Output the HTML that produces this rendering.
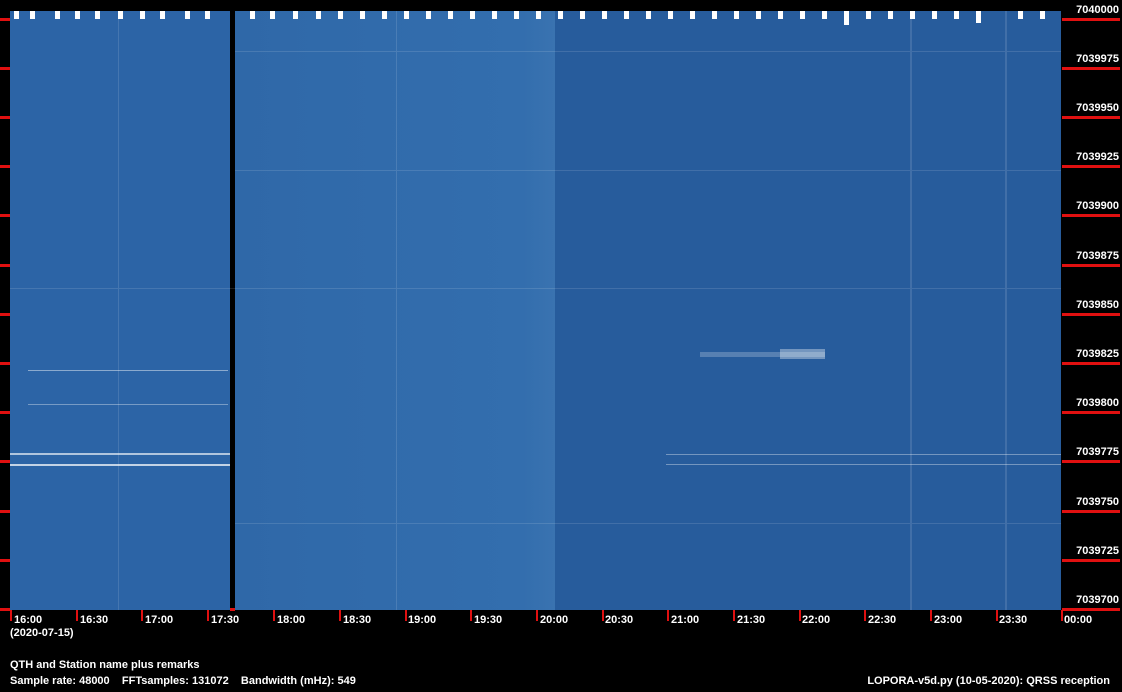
<!DOCTYPE html>
<html><head><style>
*{margin:0;padding:0}
body{width:1122px;height:692px;background:#000;position:relative;overflow:hidden;font-family:"Liberation Sans",sans-serif;font-weight:bold;font-size:11px;color:#fff}
.a{position:absolute}
.lab{position:absolute;right:3px;width:60px;text-align:right;font-size:11px}
.tl{position:absolute;top:614px;font-size:11px}
.tk{position:absolute;top:610px;width:2px;height:11px;background:#e01010}
</style></head><body>
<svg class="a" style="left:0;top:0" width="1122" height="692">
<defs>
<linearGradient id="g1" x1="0" x2="1"><stop offset="0" stop-color="#2f68a8"/><stop offset="0.9" stop-color="#336eae"/><stop offset="1" stop-color="#3a73b0"/></linearGradient>
</defs>
<rect x="10" y="11" width="220" height="599" fill="#2c64a6"/>
<rect x="235" y="11" width="320" height="599" fill="url(#g1)"/>
<rect x="555" y="11" width="506" height="599" fill="#275c9c"/>
<rect x="230" y="11" width="5" height="599" fill="#000"/>
<g fill="#fff" opacity="0.9">
<rect x="10" y="453" width="220" height="2" opacity="0.7"/>
<rect x="10" y="464" width="220" height="2" opacity="0.8"/>
<rect x="28" y="370" width="200" height="1" opacity="0.5"/>
<rect x="28" y="404" width="200" height="1" opacity="0.4"/>
<rect x="666" y="454" width="395" height="1" opacity="0.4"/>
<rect x="666" y="464" width="395" height="1" opacity="0.4"/>
<rect x="700" y="352" width="125" height="5" opacity="0.25"/>
<rect x="780" y="349" width="45" height="10" opacity="0.4"/>
</g>
<g fill="#fff" opacity="0.12">
<rect x="235" y="51" width="826" height="1"/><rect x="235" y="170" width="826" height="1"/>
<rect x="10" y="288" width="1051" height="1"/><rect x="235" y="523" width="826" height="1"/>
<rect x="118" y="11" width="1" height="599"/><rect x="396" y="11" width="1" height="599"/>
<rect x="910" y="11" width="2" height="599"/><rect x="1005" y="11" width="2" height="599"/>
</g>
<g fill="#fff">
<rect x="14" y="11" width="5" height="8"/><rect x="30" y="11" width="5" height="8"/><rect x="55" y="11" width="5" height="8"/><rect x="75" y="11" width="5" height="8"/><rect x="95" y="11" width="5" height="8"/><rect x="118" y="11" width="5" height="8"/><rect x="140" y="11" width="5" height="8"/><rect x="160" y="11" width="5" height="8"/><rect x="185" y="11" width="5" height="8"/><rect x="205" y="11" width="5" height="8"/>
<rect x="250" y="11" width="5" height="8"/><rect x="270" y="11" width="5" height="8"/><rect x="293" y="11" width="5" height="8"/><rect x="316" y="11" width="5" height="8"/><rect x="338" y="11" width="5" height="8"/><rect x="360" y="11" width="5" height="8"/><rect x="382" y="11" width="5" height="8"/><rect x="404" y="11" width="5" height="8"/><rect x="426" y="11" width="5" height="8"/><rect x="448" y="11" width="5" height="8"/><rect x="470" y="11" width="5" height="8"/><rect x="492" y="11" width="5" height="8"/><rect x="514" y="11" width="5" height="8"/><rect x="536" y="11" width="5" height="8"/><rect x="558" y="11" width="5" height="8"/><rect x="580" y="11" width="5" height="8"/><rect x="602" y="11" width="5" height="8"/><rect x="624" y="11" width="5" height="8"/><rect x="646" y="11" width="5" height="8"/><rect x="668" y="11" width="5" height="8"/><rect x="690" y="11" width="5" height="8"/><rect x="712" y="11" width="5" height="8"/><rect x="734" y="11" width="5" height="8"/><rect x="756" y="11" width="5" height="8"/><rect x="778" y="11" width="5" height="8"/><rect x="800" y="11" width="5" height="8"/><rect x="822" y="11" width="5" height="8"/><rect x="844" y="11" width="5" height="14"/><rect x="866" y="11" width="5" height="8"/><rect x="888" y="11" width="5" height="8"/><rect x="910" y="11" width="5" height="8"/><rect x="932" y="11" width="5" height="8"/><rect x="954" y="11" width="5" height="8"/><rect x="976" y="11" width="5" height="12"/><rect x="1018" y="11" width="5" height="8"/><rect x="1040" y="11" width="5" height="8"/>
</g>
<g fill="#e01010">
<rect x="0" y="18" width="10" height="3"/><rect x="1062" y="18" width="58" height="3"/>
<rect x="0" y="67" width="10" height="3"/><rect x="1062" y="67" width="58" height="3"/>
<rect x="0" y="116" width="10" height="3"/><rect x="1062" y="116" width="58" height="3"/>
<rect x="0" y="165" width="10" height="3"/><rect x="1062" y="165" width="58" height="3"/>
<rect x="0" y="214" width="10" height="3"/><rect x="1062" y="214" width="58" height="3"/>
<rect x="0" y="264" width="10" height="3"/><rect x="1062" y="264" width="58" height="3"/>
<rect x="0" y="313" width="10" height="3"/><rect x="1062" y="313" width="58" height="3"/>
<rect x="0" y="362" width="10" height="3"/><rect x="1062" y="362" width="58" height="3"/>
<rect x="0" y="411" width="10" height="3"/><rect x="1062" y="411" width="58" height="3"/>
<rect x="0" y="460" width="10" height="3"/><rect x="1062" y="460" width="58" height="3"/>
<rect x="0" y="510" width="10" height="3"/><rect x="1062" y="510" width="58" height="3"/>
<rect x="0" y="559" width="10" height="3"/><rect x="1062" y="559" width="58" height="3"/>
<rect x="0" y="608" width="10" height="3"/><rect x="1062" y="608" width="58" height="3"/>
<rect x="230" y="608" width="5" height="3"/>
</g>
</svg>
<div class="lab" style="top:4px">7040000</div>
<div class="lab" style="top:53px">7039975</div>
<div class="lab" style="top:102px">7039950</div>
<div class="lab" style="top:151px">7039925</div>
<div class="lab" style="top:200px">7039900</div>
<div class="lab" style="top:250px">7039875</div>
<div class="lab" style="top:299px">7039850</div>
<div class="lab" style="top:348px">7039825</div>
<div class="lab" style="top:397px">7039800</div>
<div class="lab" style="top:446px">7039775</div>
<div class="lab" style="top:496px">7039750</div>
<div class="lab" style="top:545px">7039725</div>
<div class="lab" style="top:594px">7039700</div>

<div class="tk" style="left:10px"></div><div class="tl" style="left:14px">16:00</div>
<div class="tk" style="left:76px"></div><div class="tl" style="left:80px">16:30</div>
<div class="tk" style="left:141px"></div><div class="tl" style="left:145px">17:00</div>
<div class="tk" style="left:207px"></div><div class="tl" style="left:211px">17:30</div>
<div class="tk" style="left:273px"></div><div class="tl" style="left:277px">18:00</div>
<div class="tk" style="left:339px"></div><div class="tl" style="left:343px">18:30</div>
<div class="tk" style="left:405px"></div><div class="tl" style="left:408px">19:00</div>
<div class="tk" style="left:470px"></div><div class="tl" style="left:474px">19:30</div>
<div class="tk" style="left:536px"></div><div class="tl" style="left:540px">20:00</div>
<div class="tk" style="left:602px"></div><div class="tl" style="left:605px">20:30</div>
<div class="tk" style="left:667px"></div><div class="tl" style="left:671px">21:00</div>
<div class="tk" style="left:733px"></div><div class="tl" style="left:737px">21:30</div>
<div class="tk" style="left:799px"></div><div class="tl" style="left:802px">22:00</div>
<div class="tk" style="left:864px"></div><div class="tl" style="left:868px">22:30</div>
<div class="tk" style="left:930px"></div><div class="tl" style="left:934px">23:00</div>
<div class="tk" style="left:996px"></div><div class="tl" style="left:999px">23:30</div>
<div class="tk" style="left:1061px"></div><div class="tl" style="left:1064px">00:00</div>
<div class="a" style="left:10px;top:627px">(2020-07-15)</div>
<div class="a" style="left:10px;top:659px">QTH and Station name plus remarks</div>
<div class="a" style="left:10px;top:675px;white-space:pre">Sample rate: 48000    FFTsamples: 131072    Bandwidth (mHz): 549</div>
<div class="a" style="right:12px;top:675px">LOPORA-v5d.py (10-05-2020): QRSS reception</div>
</body></html>
